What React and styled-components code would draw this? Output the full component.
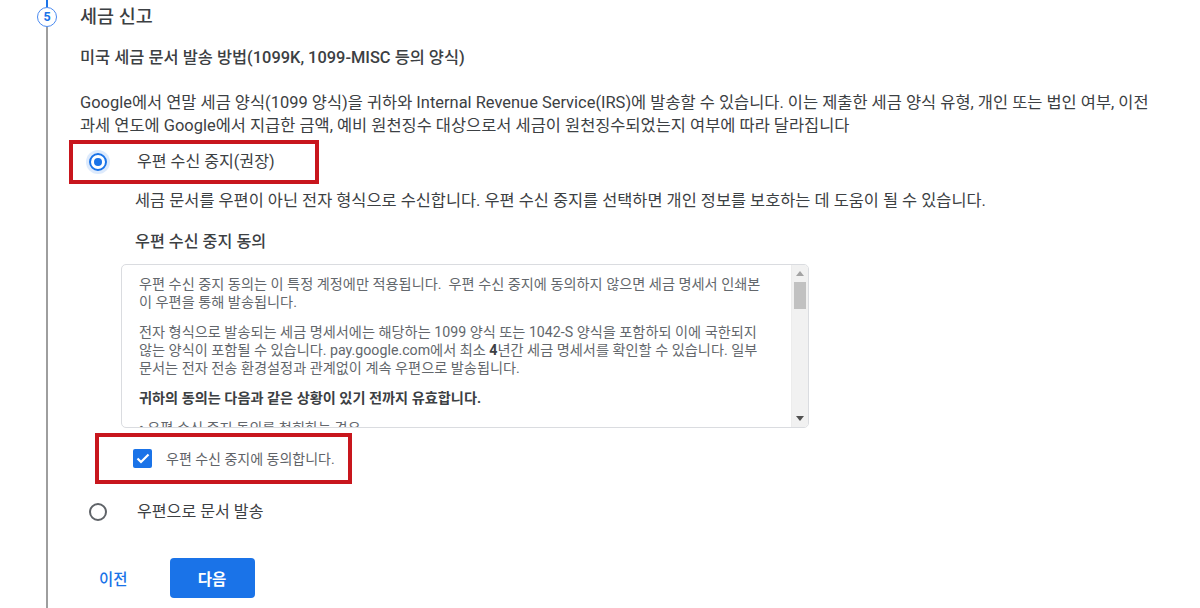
import React from "react";
import styled, { createGlobalStyle } from "styled-components";

const Global = createGlobalStyle`
  html, body { margin: 0; padding: 0; background: #fff; }
  body { font-family: Roboto, "Noto Sans CJK KR", sans-serif; color: #3c4043; }
  * { box-sizing: border-box; }
`;

const Page = styled.div`
  display: flex;
  height: 608px;
  overflow: hidden;
  padding-left: 37px;
`;

const Rail = styled.div`
  width: 20px;
  display: flex;
  flex-direction: column;
  align-items: center;
  flex-shrink: 0;
`;

const RailTop = styled.div`
  width: 2px;
  height: 7px;
  background: #1a73e8;
`;

const StepCircle = styled.div`
  width: 20px;
  height: 20px;
  border-radius: 50%;
  border: 1.5px solid #4a8af0;
  color: #1a73e8;
  font-size: 12.5px;
  font-weight: 700;
  display: flex;
  align-items: center;
  justify-content: center;
  line-height: 1;
`;

const RailLine = styled.div`
  width: 2px;
  flex: 1;
  background: #9e9e9e;
`;

const Content = styled.div`
  margin-left: 23px;
  flex: 1;
  min-width: 0;
`;

const Title = styled.h2`
  margin: 5px 0 0;
  font-size: 18.5px;
  line-height: 24px;
  font-weight: 500;
  color: #3c4043;
`;

const Subtitle = styled.div`
  margin-top: 19px;
  font-size: 16.4px;
  line-height: 20px;
  font-weight: 500;
  color: #3c4043;
`;

const Para = styled.p`
  margin: 23px 0 0;
  font-size: 16.45px;
  line-height: 23px;
  color: #3c4043;
  white-space: nowrap;
`;

const Line = styled.span`
  display: block;
`;

const Highlight = styled.div`
  display: flex;
  align-items: center;
  border: 4px solid #c8161d;
  margin-left: ${(p) => p.$left}px;
  width: ${(p) => p.$w}px;
  height: ${(p) => p.$h}px;
  margin-top: ${(p) => p.$top}px;
  padding-left: ${(p) => p.$pad}px;
`;

const OptionRow = styled.label`
  display: flex;
  align-items: center;
  font-size: 16.1px;
  line-height: 20px;
  color: #3c4043;
  margin-left: ${(p) => p.$left || 0}px;
  margin-top: ${(p) => p.$top || 0}px;
`;

const Radio = styled.span`
  width: 18px;
  height: 18px;
  border-radius: 50%;
  border: 2px solid ${(p) => (p.$checked ? "#1a73e8" : "#5f6368")};
  display: flex;
  align-items: center;
  justify-content: center;
  margin-right: 30px;
  flex-shrink: 0;
  box-shadow: ${(p) => (p.$checked ? "0 0 0 3px rgba(26,115,232,0.15)" : "none")};
  &::after {
    content: "";
    display: ${(p) => (p.$checked ? "block" : "none")};
    width: 8px;
    height: 8px;
    border-radius: 50%;
    background: #1a73e8;
  }
`;

const Indented = styled.div`
  margin-left: 55px;
`;

const Desc = styled.div`
  margin-top: 7px;
  font-size: 16.4px;
  line-height: 20px;
  color: #3c4043;
  white-space: nowrap;
`;

const SubHead = styled.div`
  margin-top: 21px;
  font-size: 16.2px;
  line-height: 20px;
  font-weight: 500;
  color: #3c4043;
`;

const ScrollBox = styled.div`
  margin-top: 12px;
  margin-left: -14px;
  width: 688px;
  height: 164px;
  border: 1px solid #dadce0;
  border-radius: 5px;
  display: flex;
  overflow: hidden;
`;

const ScrollText = styled.div`
  flex: 1;
  padding: 10px 10px 0 17px;
  overflow: hidden;
  font-size: 14.2px;
  line-height: 18px;
  color: #63676c;
  white-space: nowrap;
  & p {
    margin: 0 0 12px;
  }
  & b {
    color: #3c4043;
    font-weight: 700;
  }
`;

const Scrollbar = styled.div`
  width: 17px;
  display: flex;
  flex-direction: column;
  align-items: center;
  background: #f1f1f1;
  border-left: 1px solid #ececec;
`;

const Arrow = styled.div`
  height: 17px;
  display: flex;
  align-items: center;
  justify-content: center;
`;

const Thumb = styled.div`
  width: 12px;
  height: 27px;
  background: #c1c1c1;
`;

const Spacer = styled.div`
  flex: 1;
`;

const CheckBox = styled.span`
  width: 19px;
  height: 19px;
  border-radius: 2px;
  background: #1a73e8;
  display: flex;
  align-items: center;
  justify-content: center;
  margin-right: 14px;
  flex-shrink: 0;
`;

const CheckLabel = styled.span`
  font-size: 14px;
  color: #5f6368;
`;

const Actions = styled.div`
  display: flex;
  align-items: center;
  margin-top: 36px;
  margin-left: 10px;
`;

const TextButton = styled.button`
  border: none;
  background: none;
  color: #1a73e8;
  font-family: inherit;
  font-size: 15.5px;
  font-weight: 500;
  padding: 0 9px;
  height: 40px;
  cursor: pointer;
`;

const PrimaryButton = styled.button`
  border: none;
  background: #1a73e8;
  color: #fff;
  font-family: inherit;
  font-size: 15.5px;
  font-weight: 700;
  width: 85px;
  height: 40px;
  border-radius: 4px;
  margin-left: 33px;
  cursor: pointer;
`;

export default function App() {
  return (
    <>
      <Global />
      <Page>
        <Rail>
          <RailTop />
          <StepCircle>5</StepCircle>
          <RailLine />
        </Rail>
        <Content>
          <Title>세금 신고</Title>
          <Subtitle>미국 세금 문서 발송 방법(1099K, 1099-MISC 등의 양식)</Subtitle>
          <Para>
            <Line>
              Google에서 연말 세금 양식(1099 양식)을 귀하와 Internal Revenue Service(IRS)에 발송할 수 있습니다. 이는 제출한 세금 양식 유형, 개인 또는 법인 여부, 이전
            </Line>
            <Line>
              과세 연도에 Google에서 지급한 금액, 예비 원천징수 대상으로서 세금이 원천징수되었는지 여부에 따라 달라집니다
            </Line>
          </Para>
          <Highlight $left={-11} $w={250} $h={44} $top={3} $pad={16}>
            <OptionRow>
              <Radio $checked />
              우편 수신 중지(권장)
            </OptionRow>
          </Highlight>
          <Indented>
            <Desc>
              세금 문서를 우편이 아닌 전자 형식으로 수신합니다. 우편 수신 중지를 선택하면 개인 정보를 보호하는 데 도움이 될 수 있습니다.
            </Desc>
            <SubHead>우편 수신 중지 동의</SubHead>
            <ScrollBox>
              <ScrollText>
                <p>
                  <Line>
                    우편 수신 중지 동의는 이 특정 계정에만 적용됩니다.&nbsp; 우편 수신 중지에 동의하지 않으면 세금 명세서 인쇄본
                  </Line>
                  <Line>이 우편을 통해 발송됩니다.</Line>
                </p>
                <p>
                  <Line>
                    전자 형식으로 발송되는 세금 명세서에는 해당하는 1099 양식 또는 1042-S 양식을 포함하되 이에 국한되지
                  </Line>
                  <Line>
                    않는 양식이 포함될 수 있습니다. pay.google.com에서 최소 <b>4</b>년간 세금 명세서를 확인할 수 있습니다. 일부
                  </Line>
                  <Line>문서는 전자 전송 환경설정과 관계없이 계속 우편으로 발송됩니다.</Line>
                </p>
                <p>
                  <b>귀하의 동의는 다음과 같은 상황이 있기 전까지 유효합니다.</b>
                </p>
                <p>• 우편 수신 중지 동의를 철회하는 경우</p>
              </ScrollText>
              <Scrollbar>
                <Arrow>
                  <svg width="8" height="5" viewBox="0 0 8 5">
                    <path d="M0 5 L4 0 L8 5 Z" fill="#a3a3a3" />
                  </svg>
                </Arrow>
                <Thumb />
                <Spacer />
                <Arrow>
                  <svg width="8" height="5" viewBox="0 0 8 5">
                    <path d="M0 0 L4 5 L8 0 Z" fill="#505050" />
                  </svg>
                </Arrow>
              </Scrollbar>
            </ScrollBox>
          </Indented>
          <Highlight $left={15} $w={257} $h={51} $top={5} $pad={34}>
            <OptionRow as="div">
              <CheckBox>
                <svg width="14" height="11" viewBox="0 0 14 11">
                  <path d="M1.5 5.5 L5 9 L12.5 1.5" fill="none" stroke="#fff" strokeWidth="2.2" />
                </svg>
              </CheckBox>
              <CheckLabel>우편 수신 중지에 동의합니다.</CheckLabel>
            </OptionRow>
          </Highlight>
          <OptionRow $left={9} $top={18}>
            <Radio />
            우편으로 문서 발송
          </OptionRow>
          <Actions>
            <TextButton>이전</TextButton>
            <PrimaryButton>다음</PrimaryButton>
          </Actions>
        </Content>
      </Page>
    </>
  );
}
